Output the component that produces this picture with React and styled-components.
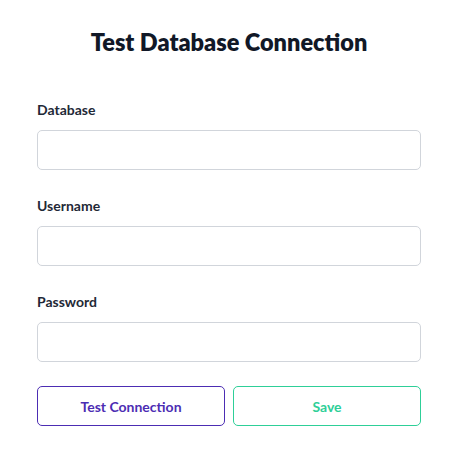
import React from 'react';
import styled, { createGlobalStyle } from 'styled-components';

const GlobalStyle = createGlobalStyle`
  body {
    margin: 0;
    background: #ffffff;
    font-family: Lato, "Open Sans", sans-serif;
  }
`;

const Page = styled.div`
  width: 384px;
  margin-left: 37px;
  padding-top: 26px;
`;

const Title = styled.h1`
  margin: 0 0 42px;
  font-size: 23.5px;
  line-height: 32px;
  font-weight: 800;
  color: #111827;
  text-align: center;
`;

const Fields = styled.div`
  display: flex;
  flex-direction: column;
  gap: 26px;
  margin-bottom: 24px;
`;

const Field = styled.div`
  display: flex;
  flex-direction: column;
  gap: 10px;
`;

const Label = styled.label`
  font-size: 14px;
  line-height: 20px;
  font-weight: 700;
  color: #1f2937;
`;

const Input = styled.input`
  box-sizing: border-box;
  width: 100%;
  height: 40px;
  border: 1px solid #d1d5db;
  border-radius: 5px;
  padding: 0 12px;
  font-family: inherit;
  font-size: 14px;
  outline: none;
`;

const Actions = styled.div`
  display: grid;
  grid-template-columns: 1fr 1fr;
  gap: 8px;
`;

const Button = styled.button`
  height: 40px;
  background: #ffffff;
  border: 1px solid ${(p) => p.$color};
  color: ${(p) => p.$color};
  border-radius: 5px;
  font-family: inherit;
  font-size: 14px;
  font-weight: 700;
  cursor: pointer;
`;

const fields = ['Database', 'Username', 'Password'];

const App = () => (
  <>
    <GlobalStyle />
    <Page>
      <Title>Test Database Connection</Title>
      <Fields>
        {fields.map((name) => (
          <Field key={name}>
            <Label>{name}</Label>
            <Input type={name === 'Password' ? 'password' : 'text'} />
          </Field>
        ))}
      </Fields>
      <Actions>
        <Button $color="#4c2db3">Test Connection</Button>
        <Button $color="#2ecf98">Save</Button>
      </Actions>
    </Page>
  </>
);

export default App;
